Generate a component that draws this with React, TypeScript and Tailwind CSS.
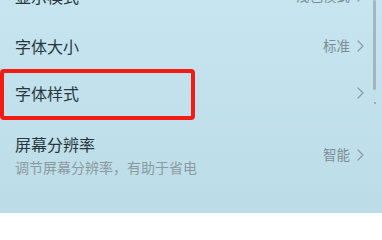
import React from "react";

const Chevron = () => (
  <svg width="7" height="12" viewBox="0 0 7 12" fill="none" className="shrink-0">
    <path d="M1 1l5 5-5 5" stroke="#8b9ca3" strokeWidth="1.2" strokeLinecap="round" strokeLinejoin="round" />
  </svg>
);

export default function App() {
  const font = { fontFamily: '"Noto Sans CJK SC", "Noto Sans", sans-serif' };
  return (
    <div className="w-[382px] h-[223px] bg-white overflow-hidden" style={font}>
      <div className="relative h-[213px] overflow-hidden bg-gradient-to-b from-[#c6e5f1] to-[#bcdce7]">
        <div className="flex flex-col mt-[-31px]">
          <div className="h-[53px] flex items-center justify-between pl-[15px] pr-[18px]">
            <span className="text-[16px] text-[#28373d]">显示模式</span>
            <div className="flex items-center gap-[7px]">
              <span className="text-[13.5px] text-[#7d8d93]">浅色模式</span>
              <Chevron />
            </div>
          </div>
          <div className="h-[47px] flex items-center justify-between pl-[15px] pr-[18px]">
            <span className="text-[16px] text-[#28373d]">字体大小</span>
            <div className="flex items-center gap-[7px]">
              <span className="text-[13.5px] text-[#7d8d93]">标准</span>
              <Chevron />
            </div>
          </div>
          <div className="h-[47px] flex items-center justify-between pl-[15px] pr-[18px]">
            <span className="text-[16px] text-[#28373d]">字体样式</span>
            <Chevron />
          </div>
          <div className="h-[77px] flex items-center justify-between pl-[15px] pr-[18px]">
            <div className="flex flex-col gap-[4px]">
              <span className="text-[16px] leading-[20px] text-[#28373d]">屏幕分辨率</span>
              <span className="text-[14px] leading-[18px] text-[#8a9aa1] whitespace-nowrap">调节屏幕分辨率，有助于省电</span>
            </div>
            <div className="flex items-center gap-[7px]">
              <span className="text-[13.5px] text-[#7d8d93]">智能</span>
              <Chevron />
            </div>
          </div>
        </div>
        <div className="absolute right-[6px] top-0 w-[3px] h-[90px] rounded-full bg-[#a3b6bd]" />
        <div className="absolute left-[374px] top-[102px] w-[2px] h-[2px] rounded-full bg-[#8fa2a9]" />
        <div className="absolute left-0 top-[69px] w-[195px] h-[51px] border-[4px] border-[#f41b12] rounded-[4px]" />
      </div>
    </div>
  );
}
